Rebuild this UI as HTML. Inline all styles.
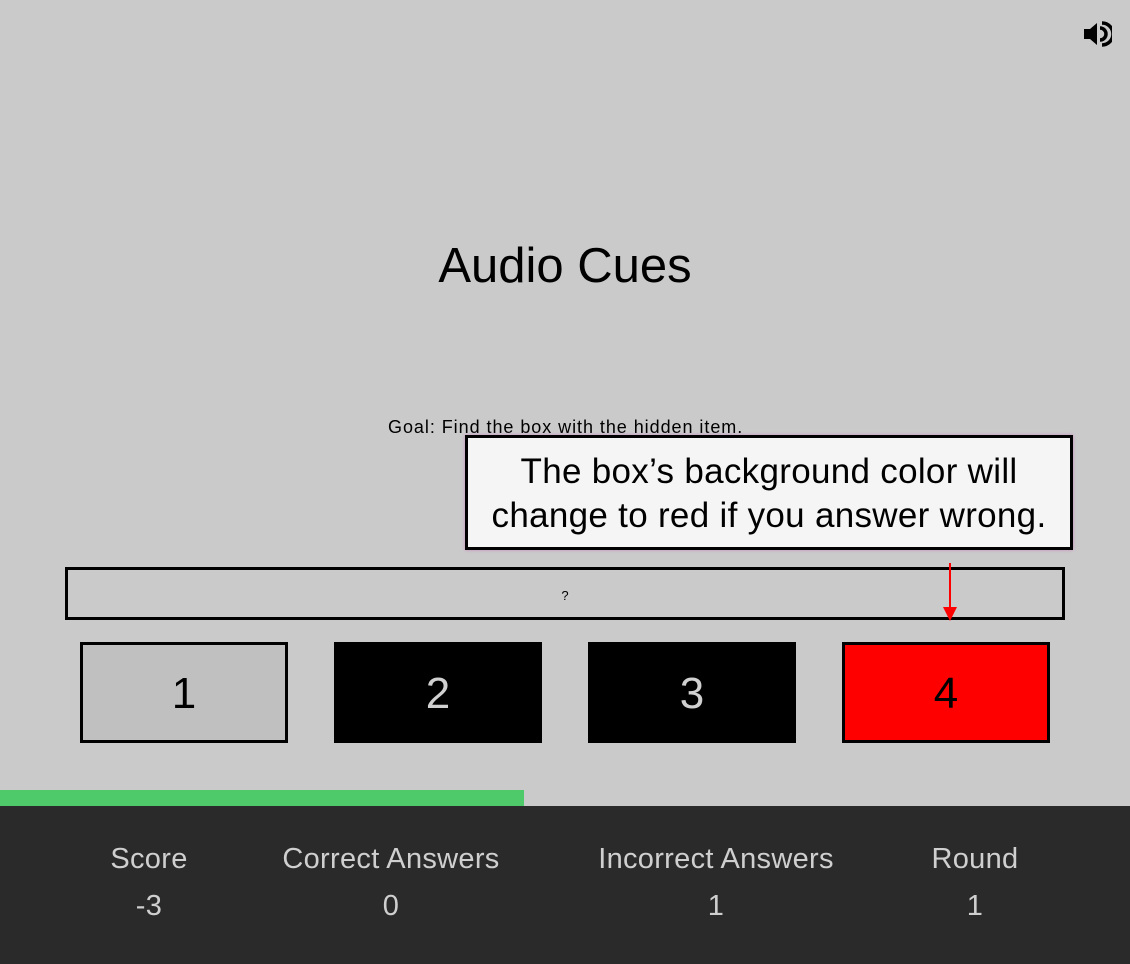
<!DOCTYPE html>
<html><head><style>
body{margin:0;width:1130px;height:964px;background:#cacaca;font-family:"Liberation Sans",sans-serif;position:relative;overflow:hidden}
.a{position:absolute}
.box{position:absolute;top:642px;width:208px;height:101px;box-sizing:border-box;border:3px solid #000;font-size:44px;text-align:center;line-height:97px}
.lab{position:absolute;font-size:29px;color:#cfcfcf;transform:translateX(-50%);white-space:nowrap;letter-spacing:0.3px}
</style></head><body>
<svg class="a" style="left:1082px;top:20px" width="30" height="28" viewBox="0 0 30 28">
<polygon points="2,9 8,9 15,3 15,25 8,19 2,19" fill="#000"/>
<path d="M18,8 A6,6 0 0 1 18,20" fill="none" stroke="#000" stroke-width="3.5"/>
<path d="M20,3 A11,11 0 0 1 20,25" fill="none" stroke="#000" stroke-width="3.5"/>
</svg>
<div class="a" style="left:0;width:1130px;top:238px;text-align:center;font-size:49px">Audio Cues</div>
<div class="a" style="left:388px;top:417px;font-size:18px;letter-spacing:0.95px">Goal: Find the box with the hidden item.</div>
<div class="a" style="left:65px;top:567px;width:1000px;height:53px;box-sizing:border-box;border:3px solid #000;text-align:center;line-height:51px;font-size:13px">?</div>
<div class="a" style="left:465px;top:435px;width:608px;height:115px;box-sizing:border-box;border:3px solid #000;background:#f5f5f5;box-shadow:0 0 3px #c98bc0;text-align:center;font-size:35px;line-height:44px;padding-top:12px;letter-spacing:0.3px">The box’s background color will<br>change to red if you answer wrong.</div>
<svg class="a" style="left:940px;top:563px" width="20" height="60"><line x1="10" y1="0" x2="10" y2="48" stroke="red" stroke-width="2"/><polygon points="3,44 17,44 10,58" fill="red"/></svg>
<div class="box" style="left:80px;background:#c0c0c0;color:#000">1</div>
<div class="box" style="left:334px;background:#000;color:#d0d0d0">2</div>
<div class="box" style="left:588px;background:#000;color:#d0d0d0">3</div>
<div class="box" style="left:842px;background:#f00;color:#000">4</div>
<div class="a" style="left:0;top:790px;width:524px;height:16px;background:#4fca6a"></div>
<div class="a" style="left:0;top:806px;width:1130px;height:158px;background:#2a2a2a"></div>
<div class="lab" style="left:149px;top:843px">Score</div><div class="lab" style="left:149px;top:890px">-3</div>
<div class="lab" style="left:391px;top:843px">Correct Answers</div><div class="lab" style="left:391px;top:890px">0</div>
<div class="lab" style="left:716px;top:843px">Incorrect Answers</div><div class="lab" style="left:716px;top:890px">1</div>
<div class="lab" style="left:975px;top:843px">Round</div><div class="lab" style="left:975px;top:890px">1</div>
</body></html>
